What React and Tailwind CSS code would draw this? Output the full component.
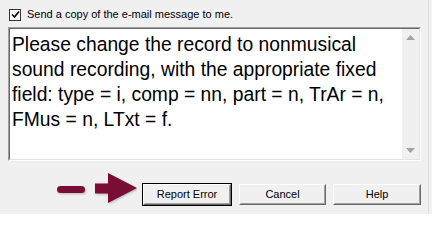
const message =
  "Please change the record to nonmusical sound recording, with the appropriate fixed field: type = i, comp = nn, part = n, TrAr = n, FMus = n, LTxt = f.";

const buttons = ["Report Error", "Cancel", "Help"];

function WinButton({ label, isDefault, width }) {
  return (
    <div
      className={
        "mt-[11px] h-[23px] " +
        (isDefault ? "border border-black" : "border border-transparent")
      }
      style={{ width }}
    >
      <div className="h-full border border-t-white border-l-white border-b-[#696969] border-r-[#696969]">
        <div className="h-full flex items-center justify-center border border-transparent border-b-[#a0a0a0] border-r-[#a0a0a0] text-[11px] text-black bg-[#f0f0f0]">
          {label}
        </div>
      </div>
    </div>
  );
}

function PointerArrow() {
  return (
    <svg width="82" height="34" viewBox="0 0 82 34" className="shrink-0">
      <defs>
        <filter id="sh" x="-20%" y="-20%" width="140%" height="140%">
          <feDropShadow dx="1" dy="1" stdDeviation="1" floodColor="#000" floodOpacity="0.25" />
        </filter>
      </defs>
      <g fill="#7a0b35" filter="url(#sh)">
        <rect x="2" y="14" width="28" height="7" rx="3.5" />
        <polygon points="40,11.5 53,11.5 53,1 82,16 53,31 53,21.5 40,21.5" />
      </g>
    </svg>
  );
}

export default function App() {
  return (
    <div
      className="relative w-[432px] h-[214px] bg-[#f0f0f0] overflow-hidden flex flex-col"
      style={{ fontFamily: '"Liberation Sans", Arial, sans-serif' }}
    >
      {/* send copy checkbox */}
      <div className="flex items-center mt-[8px] ml-[9px] h-[13px]">
        <div className="w-[12px] h-[12px] border border-[#333] bg-white flex items-center justify-center">
          <svg width="9" height="9" viewBox="0 0 9 9">
            <path d="M1 4.5 L3.5 7 L8 1.5" fill="none" stroke="#000" strokeWidth="1.6" />
          </svg>
        </div>
        <span className="ml-[6px] text-[11px] text-black leading-none">
          Send a copy of the e-mail message to me.
        </span>
      </div>

      {/* message box */}
      <div className="mt-[6px] ml-[8px] w-[413px] h-[134px] shrink-0 border border-t-[#a0a0a0] border-l-[#a0a0a0] border-b-white border-r-white">
        <div className="h-full flex border border-t-[#696969] border-l-[#696969] border-b-[#e3e3e3] border-r-[#e3e3e3] bg-white">
          <div
            className="flex-1 pl-[2px] pt-[3px] text-[19.3px] leading-[25px] text-black"
            style={{ fontFamily: "Arial, 'Liberation Sans', sans-serif" }}
          >
            {message}
          </div>
          <div className="w-[17px] bg-[#f0f0f0] flex flex-col justify-between items-center py-[6px]">
            <svg width="9" height="5" viewBox="0 0 9 5">
              <polygon points="0,5 4.5,0 9,5" fill="#a3a3a3" />
            </svg>
            <svg width="9" height="5" viewBox="0 0 9 5">
              <polygon points="0,0 9,0 4.5,5" fill="#a3a3a3" />
            </svg>
          </div>
        </div>
      </div>

      {/* button row */}
      <div className="flex items-start mt-[11px] ml-[55px]">
        <PointerArrow />
        <div className="ml-[5px]">
          <WinButton label={buttons[0]} isDefault width={90} />
        </div>
        <div className="ml-[6px]">
          <WinButton label={buttons[1]} width={89} />
        </div>
        <div className="ml-[5px]">
          <WinButton label={buttons[2]} width={90} />
        </div>
      </div>

      <div className="absolute top-0 right-[3px] w-px h-full bg-[#dcdcdc]" />
    </div>
  );
}
